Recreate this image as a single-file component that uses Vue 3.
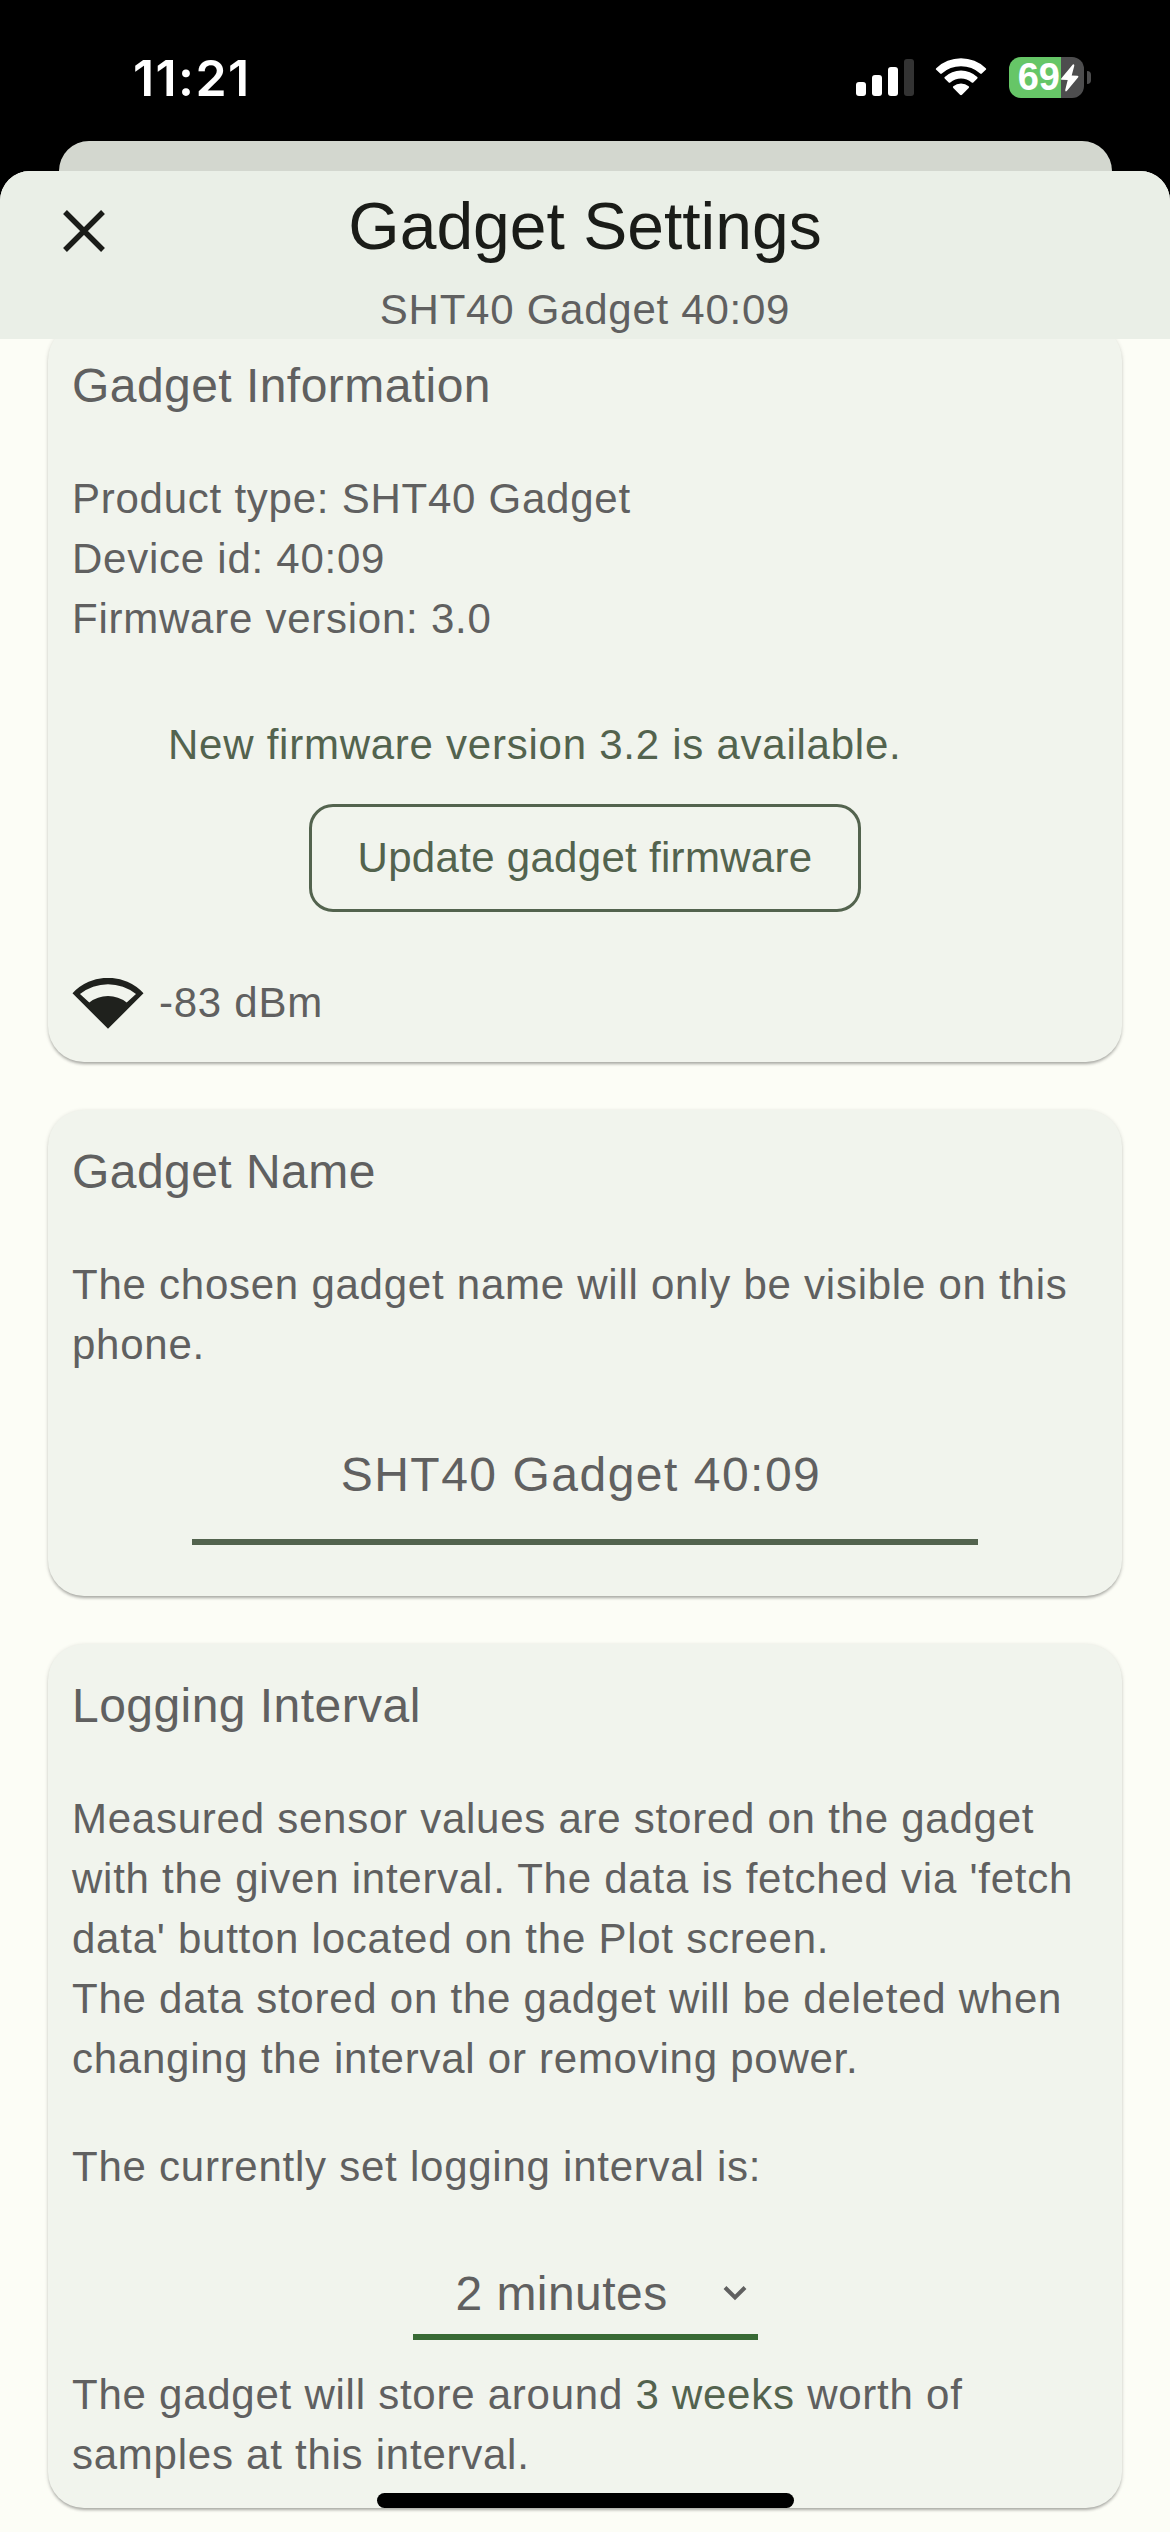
<script setup>
const signalBars = [
  { height: 14, on: true },
  { height: 21, on: true },
  { height: 29, on: true },
  { height: 37, on: false },
]
const info = [
  'Product type: SHT40 Gadget',
  'Device id: 40:09',
  'Firmware version: 3.0',
]
const intervals = ['2 minutes']
</script>

<template>
  <div class="screen">
    <div class="status">
      <span class="time">11:21</span>
      <div class="indicators">
        <div class="signal">
          <i v-for="bar in signalBars" :key="bar.height" :class="{ off: !bar.on }" :style="{ height: bar.height + 'px' }"></i>
        </div>
        <svg class="wifi" width="52" height="38" viewBox="0 0 52 38" fill="#fff">
          <path d="M1.2 10.2 Q0.4 11 1.2 11.8 L5.2 15.6 Q6 16.3 6.800 15.600 A28.500 28.500 0 0 1 45.200 15.600 Q46 16.300 46.800 15.600 L50.800 11.800 Q51.600 11 50.800 10.200 A36 36 0 0 0 1.200 10.200 Z" />
          <path d="M9.700 19 Q9 19.700 9.700 20.400 L13.700 24.400 Q14.500 25 15.300 24.400 A17 17 0 0 1 36.700 24.400 Q37.500 25 38.300 24.400 L42.300 20.400 Q43 19.700 42.300 19 A24 24 0 0 0 9.700 19 Z" />
          <path d="M18.300 28.300 Q17.400 29 18.300 29.900 L25 36.700 Q26 37.600 27 36.700 L33.700 29.900 Q34.600 29 33.700 28.300 A12.200 12.200 0 0 0 18.300 28.300 Z" />
        </svg>
        <div class="battery">
          <div class="cell">
            <span class="level">69</span>
            <svg class="bolt" width="20" height="30" viewBox="0 0 20 30" fill="#fff">
              <path d="M12.800 1.500 L1.200 15.400 Q0.500 16.600 1.800 16.700 L7.700 17 L5.200 27 Q5.200 29.200 6.800 28 L18.200 14.200 Q19 13 17.500 12.800 L11.700 12.500 L14.300 2.700 Q14.400 0.500 12.800 1.500 Z" />
            </svg>
          </div>
          <i class="nub"></i>
        </div>
      </div>
    </div>
    <div class="behind"></div>
    <div class="sheet">
      <header class="header">
        <svg class="close" width="42" height="42" viewBox="0 0 42 42" stroke="#1a1c18" stroke-width="5.400">
          <path d="M2 2 L40 40 M40 2 L2 40" />
        </svg>
        <h1>Gadget Settings</h1>
        <p>SHT40 Gadget 40:09</p>
      </header>
      <main class="content">
        <section class="card first">
          <h2>Gadget Information</h2>
          <p v-for="line in info" :key="line">{{ line }}</p>
          <p class="notice">New firmware version 3.2 is available.</p>
          <button class="update">Update gadget firmware</button>
          <div class="rssi">
            <svg width="72" height="51" viewBox="0 0 72 51" fill="#1f211d">
              <path fill-rule="evenodd" d="M0.500 15.300 A48.400 48.400 0 0 1 71.500 15.300 L36 50.800 Z M8 16 L17.300 24.500 A30 30 0 0 1 54.700 24.500 L64 16 A45 45 0 0 0 8 16 Z" />
            </svg>
            <span>-83 dBm</span>
          </div>
        </section>
        <section class="card name">
          <h2>Gadget Name</h2>
          <p>The chosen gadget name will only be visible on this phone.</p>
          <div class="field">SHT40 Gadget 40:09</div>
        </section>
        <section class="card logging">
          <h2>Logging Interval</h2>
          <p>
            Measured sensor values are stored on the gadget with the given interval. The data is fetched via 'fetch data' button located on the Plot screen.<br />
            The data stored on the gadget will be deleted when changing the interval or removing power.
          </p>
          <p class="current">The currently set logging interval is:</p>
          <div class="select">
            <span>{{ intervals[0] }}</span>
            <svg width="24" height="16" viewBox="0 0 24 16" fill="none" stroke="#606060" stroke-width="4">
              <path d="M2 2.500 L12 12.500 L22 2.500" />
            </svg>
          </div>
          <p>The gadget will store around <em>3 weeks</em> worth of<br />samples at this interval.</p>
        </section>
      </main>
      <div class="home"></div>
    </div>
  </div>
</template>

<style>
body {
  margin: 0;
  background: #000;
}
</style>

<style scoped>
.screen {
  width: 1170px;
  height: 2532px;
  display: flex;
  flex-direction: column;
  overflow: hidden;
  background: #000;
  font-family: "Liberation Sans", Arial, sans-serif;
  color: #606060;
}
h1, h2, p {
  margin: 0;
  font-weight: 400;
}
.status {
  height: 141px;
  flex: none;
  display: flex;
  justify-content: space-between;
  align-items: flex-start;
  box-sizing: border-box;
  padding: 48px 79px 0 133px;
  color: #fff;
}
.time {
  font: 600 50px/60px Inter, sans-serif;
  letter-spacing: 1.4px;
}
.indicators {
  display: flex;
  align-items: flex-start;
  padding-top: 9px;
}
.signal {
  display: flex;
  align-items: flex-end;
  gap: 6px;
  height: 39px;
  margin-right: 21px;
}
.signal i {
  width: 10px;
  border-radius: 3px;
  background: #fff;
}
.signal .off {
  background: #333;
}
.wifi {
  margin: 1px 22px 0 0;
}
.battery {
  display: flex;
  align-items: center;
  gap: 3px;
}
.cell {
  width: 75px;
  height: 41px;
  border-radius: 12px;
  display: flex;
  align-items: center;
  background: linear-gradient(90deg, #66c667 52px, #4d4d4e 52px);
}
.level {
  width: 51px;
  text-align: right;
  font: 700 38px/41px "Liberation Sans", sans-serif;
}
.bolt {
  flex: none;
}
.nub {
  width: 4px;
  height: 13px;
  border-radius: 0 4px 4px 0;
  background: #4d4d4e;
}
.behind {
  height: 30px;
  flex: none;
  margin: 0 58px 0 59px;
  border-radius: 30px 30px 0 0;
  background: #d3d7cf;
}
.sheet {
  position: relative;
  flex: 1;
  display: flex;
  flex-direction: column;
  min-height: 0;
  overflow: hidden;
  border-radius: 30px 30px 0 0;
  background: #fcfdf6;
}
.header {
  position: relative;
  height: 168px;
  flex: none;
  background: #eaefe7;
  text-align: center;
}
.close {
  position: absolute;
  left: 63px;
  top: 39px;
}
h1 {
  padding-top: 13px;
  font-size: 66px;
  line-height: 84px;
  color: #1a1c18;
}
.header p {
  margin-top: 12px;
}
p {
  font-size: 42px;
  line-height: 60px;
  letter-spacing: 0.75px;
}
.content {
  flex: 1;
  min-height: 0;
  overflow: hidden;
  display: flex;
  flex-direction: column;
  gap: 48px;
  padding: 0 48px;
}
.card {
  flex: none;
  box-sizing: border-box;
  padding: 24px;
  border-radius: 36px;
  background: #f1f4ed;
  box-shadow: 0 3px 3px -1px rgba(0, 0, 0, 0.26), 0 1px 4px rgba(0, 0, 0, 0.14);
}
.first {
  height: 738px;
  margin-top: -15px;
}
.name {
  height: 486px;
}
.logging {
  height: 864px;
}
h2 {
  margin-bottom: 47px;
  padding-top: 2px;
  font-size: 48px;
  line-height: 72px;
  letter-spacing: 0.45px;
}
.notice {
  margin: 66px 0 0 96px;
  color: #53634e;
}
.update {
  display: block;
  width: 552px;
  height: 108px;
  margin: 29px auto 0;
  padding: 0;
  border: 3px solid #53634e;
  border-radius: 24px;
  background: none;
  color: #53634e;
  font: 42px/60px "Liberation Sans", Arial, sans-serif;
  letter-spacing: 0.3px;
}
.rssi {
  display: flex;
  align-items: center;
  gap: 15px;
  margin-top: 61px;
  height: 60px;
  font-size: 42px;
  line-height: 60px;
  letter-spacing: 0.75px;
}
.rssi svg {
  margin-top: 1px;
}
.field {
  width: 786px;
  height: 135px;
  box-sizing: border-box;
  margin: 35px auto 0;
  padding: 29px 8px 0 0;
  border-bottom: 6px solid #53634e;
  text-align: center;
  font-size: 48px;
  line-height: 72px;
  letter-spacing: 1.5px;
}
.current {
  margin-top: 48px;
}
.select {
  display: flex;
  align-items: flex-start;
  justify-content: space-between;
  box-sizing: border-box;
  width: 345px;
  height: 111px;
  margin: 32px auto 25px;
  padding: 29px 11px 0 43px;
  border-bottom: 6px solid #386a35;
  font-size: 48px;
  line-height: 72px;
  letter-spacing: 0.45px;
}
.select svg {
  margin-top: 27px;
}
em {
  font-style: normal;
  color: #53634e;
}
.home {
  position: absolute;
  left: 377px;
  bottom: 24px;
  width: 417px;
  height: 15px;
  border-radius: 8px;
  background: #000;
}
</style>
